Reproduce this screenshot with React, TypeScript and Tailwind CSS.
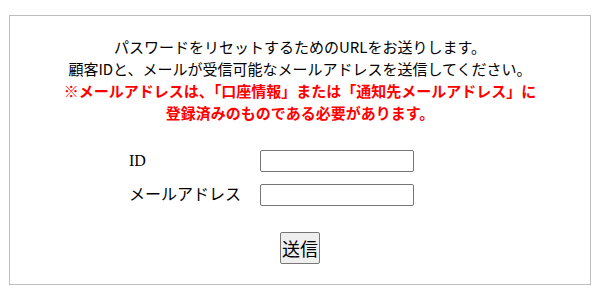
export default function App() {
  return (
    <div className="w-[600px] h-[300px] bg-white pt-[15px] pl-[9px]">
      <div
        className="w-[582px] h-[270px] border border-[#bdbdbd] pt-[20px] flex flex-col items-center"
        style={{ fontFamily: '"Noto Sans CJK JP", sans-serif' }}
      >
        <div className="text-center text-[15px] leading-[22px] text-black">
          <p>パスワードをリセットするためのURLをお送りします。</p>
          <p>顧客IDと、メールが受信可能なメールアドレスを送信してください。</p>
          <p className="font-bold text-[#ff0000]">
            ※メールアドレスは、「口座情報」または「通知先メールアドレス」に
          </p>
          <p className="font-bold text-[#ff0000]">登録済みのものである必要があります。</p>
        </div>

        <form
          className="mt-[26px] self-start ml-[119px] grid grid-cols-[131px_154px] gap-y-[12px] items-center"
          onSubmit={(e) => e.preventDefault()}
        >
          <label
            className="text-[16px] text-black leading-[22px]"
            style={{ fontFamily: '"Liberation Serif", "Noto Sans CJK JP", serif' }}
          >
            ID
          </label>
          <input className="h-[22px] w-[154px] rounded-[2px] border border-[#767676] bg-white px-1 text-[13px]" />
          <label
            className="text-[16px] text-black leading-[22px]"
            style={{ fontFamily: '"Liberation Serif", "Noto Sans CJK JP", serif' }}
          >
            メールアドレス
          </label>
          <input className="h-[22px] w-[154px] rounded-[2px] border border-[#767676] bg-white px-1 text-[13px]" />
        </form>

        <button
          type="submit"
          className="mt-[26px] h-[32px] px-[1px] rounded-[2px] border border-[#767676] bg-[#efefef] text-[18px] leading-[28px] text-black"
        >
          送信
        </button>
      </div>
    </div>
  );
}
